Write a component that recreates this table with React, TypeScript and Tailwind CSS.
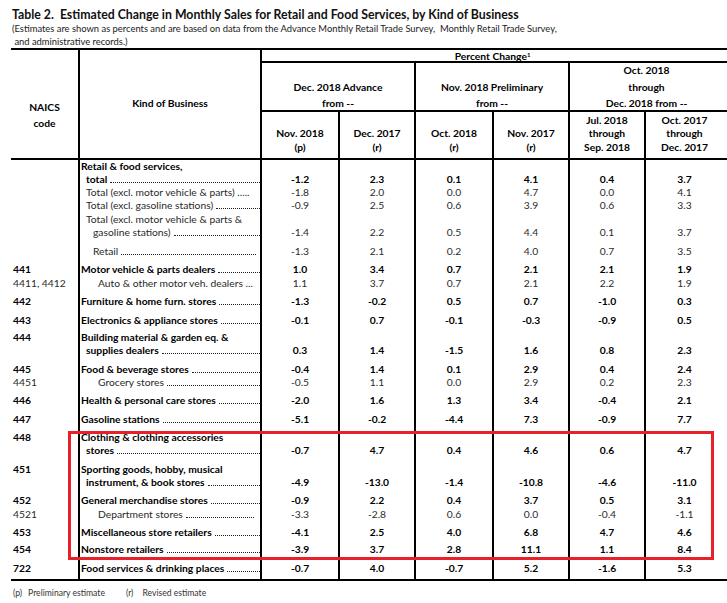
type Line = { t: string; ind: string; leader?: boolean; trail?: string };
type Row = { code?: string; lines: Line[]; vals: string[]; bold?: boolean; pt: string; pb?: string };

const valCols = ['w-[78px]', 'w-[76px]', 'w-[78px]', 'w-[76px]', 'w-[76px]', 'flex-1 pr-[4px]'];

const rows: Row[] = [
  {
    lines: [
      { t: 'Retail & food services,', ind: 'pl-[1px]' },
      { t: 'total', ind: 'pl-[6px]', leader: true },
    ],
    vals: ['-1.2', '2.3', '0.1', '4.1', '0.4', '3.7'],
    bold: true,
    pt: 'pt-0',
  },
  {
    lines: [{ t: 'Total (excl. motor vehicle & parts) .....', ind: 'pl-[6px]' }],
    vals: ['-1.8', '2.0', '0.0', '4.7', '0.0', '4.1'],
    pt: 'pt-0',
  },
  {
    lines: [{ t: 'Total (excl. gasoline stations)', ind: 'pl-[6px]', leader: true }],
    vals: ['-0.9', '2.5', '0.6', '3.9', '0.6', '3.3'],
    pt: 'pt-0',
  },
  {
    lines: [
      { t: 'Total (excl. motor vehicle & parts &', ind: 'pl-[6px]' },
      { t: 'gasoline stations)', ind: 'pl-[13px]', leader: true },
    ],
    vals: ['-1.4', '2.2', '0.5', '4.4', '0.1', '3.7'],
    pt: 'pt-[1px]',
  },
  {
    lines: [{ t: 'Retail', ind: 'pl-[13px]', leader: true, trail: 'pr-[4px]' }],
    vals: ['-1.3', '2.1', '0.2', '4.0', '0.7', '3.5'],
    pt: 'pt-[6px]',
  },
  {
    code: '441',
    lines: [{ t: 'Motor vehicle & parts dealers', ind: 'pl-[1px]', leader: true }],
    vals: ['1.0', '3.4', '0.7', '2.1', '2.1', '1.9'],
    bold: true,
    pt: 'pt-[5px]',
  },
  {
    code: '4411, 4412',
    lines: [{ t: 'Auto & other motor veh. dealers ...', ind: 'pl-[18px]' }],
    vals: ['1.1', '3.7', '0.7', '2.1', '2.2', '1.9'],
    pt: 'pt-[1px]',
  },
  {
    code: '442',
    lines: [{ t: 'Furniture & home furn. stores', ind: 'pl-[1px]', leader: true }],
    vals: ['-1.3', '-0.2', '0.5', '0.7', '-1.0', '0.3'],
    bold: true,
    pt: 'pt-[5px]',
  },
  {
    code: '443',
    lines: [{ t: 'Electronics & appliance stores', ind: 'pl-[1px]', leader: true }],
    vals: ['-0.1', '0.7', '-0.1', '-0.3', '-0.9', '0.5'],
    bold: true,
    pt: 'pt-[6px]',
  },
  {
    code: '444',
    lines: [
      { t: 'Building material & garden eq. &', ind: 'pl-[1px]' },
      { t: 'supplies dealers', ind: 'pl-[6px]', leader: true },
    ],
    vals: ['0.3', '1.4', '-1.5', '1.6', '0.8', '2.3'],
    bold: true,
    pt: 'pt-[4px]',
  },
  {
    code: '445',
    lines: [{ t: 'Food & beverage stores', ind: 'pl-[1px]', leader: true }],
    vals: ['-0.4', '1.4', '0.1', '2.9', '0.4', '2.4'],
    bold: true,
    pt: 'pt-[6px]',
  },
  {
    code: '4451',
    lines: [{ t: 'Grocery stores', ind: 'pl-[18px]', leader: true }],
    vals: ['-0.5', '1.1', '0.0', '2.9', '0.2', '2.3'],
    pt: 'pt-0',
  },
  {
    code: '446',
    lines: [{ t: 'Health & personal care stores', ind: 'pl-[1px]', leader: true }],
    vals: ['-2.0', '1.6', '1.3', '3.4', '-0.4', '2.1'],
    bold: true,
    pt: 'pt-[5px]',
  },
  {
    code: '447',
    lines: [{ t: 'Gasoline stations', ind: 'pl-[1px]', leader: true }],
    vals: ['-5.1', '-0.2', '-4.4', '7.3', '-0.9', '7.7'],
    bold: true,
    pt: 'pt-[6px]',
  },
  {
    code: '448',
    lines: [
      { t: 'Clothing & clothing accessories', ind: 'pl-[1px]' },
      { t: 'stores', ind: 'pl-[6px]', leader: true },
    ],
    vals: ['-0.7', '4.7', '0.4', '4.6', '0.6', '4.7'],
    bold: true,
    pt: 'pt-[5px]',
  },
  {
    code: '451',
    lines: [
      { t: 'Sporting goods, hobby, musical', ind: 'pl-[1px]' },
      { t: 'instrument, & book stores', ind: 'pl-[6px]', leader: true },
    ],
    vals: ['-4.9', '-13.0', '-1.4', '-10.8', '-4.6', '-11.0'],
    bold: true,
    pt: 'pt-[6px]',
  },
  {
    code: '452',
    lines: [{ t: 'General merchandise stores', ind: 'pl-[1px]', leader: true }],
    vals: ['-0.9', '2.2', '0.4', '3.7', '0.5', '3.1'],
    bold: true,
    pt: 'pt-[5px]',
  },
  {
    code: '4521',
    lines: [{ t: 'Department stores', ind: 'pl-[18px]', leader: true, trail: 'pr-[6px]' }],
    vals: ['-3.3', '-2.8', '0.6', '0.0', '-0.4', '-1.1'],
    pt: 'pt-[1px]',
  },
  {
    code: '453',
    lines: [{ t: 'Miscellaneous store retailers', ind: 'pl-[1px]', leader: true }],
    vals: ['-4.1', '2.5', '4.0', '6.8', '4.7', '4.6'],
    bold: true,
    pt: 'pt-[5px]',
  },
  {
    code: '454',
    lines: [{ t: 'Nonstore retailers', ind: 'pl-[1px]', leader: true }],
    vals: ['-3.9', '3.7', '2.8', '11.1', '1.1', '8.4'],
    bold: true,
    pt: 'pt-[4px]',
  },
  {
    code: '722',
    lines: [{ t: 'Food services & drinking places', ind: 'pl-[1px]', leader: true }],
    vals: ['-0.7', '4.0', '-0.7', '5.2', '-1.6', '5.3'],
    bold: true,
    pt: 'pt-[6px]',
    pb: 'pb-[4px]',
  },
];

function BodyRow({ row }: { row: Row }) {
  const weight = row.bold ? 'font-bold text-black' : 'font-normal text-[#2a2a2a]';
  const pad = `${row.pt} ${row.pb ?? ''}`;
  return (
    <div className={`flex ${weight}`}>
      <div className={`w-[69px] border-r-2 border-black pl-[2px] ${pad}`}>
        <div className="h-[13px] leading-[13px]">{row.code}</div>
      </div>
      <div className={`w-[182px] border-r-2 border-black ${pad}`}>
        {row.lines.map((l, i) => (
          <div key={i} className={`flex h-[13px] leading-[13px] ${l.ind} ${l.trail ?? ''}`}>
            <span className="whitespace-pre">{l.t}</span>
            {/* dot leader */}
            {l.leader && <span className="mb-[3px] ml-[3px] min-w-0 flex-1 border-b border-dotted border-[#222]" />}
          </div>
        ))}
      </div>
      {row.vals.map((v, i) => (
        <div
          key={i}
          className={`flex flex-col justify-end text-center ${valCols[i]} ${i < 5 ? 'border-r-2 border-black' : ''} ${pad}`}
        >
          <div className="h-[13px] leading-[13px]">{v}</div>
        </div>
      ))}
    </div>
  );
}

function Group({ lines }: { lines: string[] }) {
  return (
    <div className="flex h-[47px] flex-col justify-between text-center">
      {lines.map((l, i) => (
        <div key={i} className="h-[14px] leading-[14px]">
          {l}
        </div>
      ))}
    </div>
  );
}

function SubHead({ lines, w, last }: { lines: string[]; w: string; last?: boolean }) {
  return (
    <div
      className={`flex h-[46px] flex-col justify-end pb-[4px] text-center ${w} ${last ? '' : 'border-r-2 border-black'}`}
    >
      {lines.map((l, i) => (
        <div key={i} className="h-[13.5px] leading-[13.5px]">
          {l}
        </div>
      ))}
    </div>
  );
}

export default function App() {
  return (
    <div className="relative h-[603px] w-[727px] overflow-hidden bg-white font-['Lato',sans-serif] text-black">
      <div className="pl-[12px] pt-[7px]">
        <div className="whitespace-pre text-[12.3px] font-bold leading-[16px] text-[#111]">
          {'Table 2.  Estimated Change in Monthly Sales for Retail and Food Services, by Kind of Business'}
        </div>
        <div className="whitespace-pre text-[9.4px] leading-[12.5px] text-[#1a1a1a]">
          {'(Estimates are shown as percents and are based on data from the Advance Monthly Retail Trade Survey,  Monthly Retail Trade Survey,'}
          <br />
          {' and administrative records.)'}
        </div>
      </div>

      <div className="ml-[11px] text-[10.3px]">
        {/* header */}
        <div className="flex border-y-2 border-black font-bold">
          <div className="flex w-[69px] flex-col items-center border-r-2 border-black pt-[49px]">
            <div className="leading-[16px]">NAICS</div>
            <div className="leading-[16px]">code</div>
          </div>
          <div className="w-[182px] border-r-2 border-black pt-[46px] text-center leading-[14px]">
            Kind of Business
          </div>
          <div className="flex flex-1 flex-col">
            <div className="h-[13px] border-b-2 border-black pr-[4px] text-center leading-[13px]">
              Percent Change<sup className="text-[6px]">1</sup>
            </div>
            <div className="flex border-b-2 border-black">
              <div className="w-[154px] border-r-2 border-black">
                <Group lines={['', 'Dec. 2018 Advance', 'from --']} />
              </div>
              <div className="w-[154px] border-r-2 border-black">
                <Group lines={['', 'Nov. 2018 Preliminary', 'from --']} />
              </div>
              <div className="flex-1 pr-[4px]">
                <Group lines={['Oct. 2018', 'through', 'Dec. 2018 from --']} />
              </div>
            </div>
            <div className="flex">
              <SubHead w="w-[78px]" lines={['Nov. 2018', '(p)']} />
              <SubHead w="w-[76px]" lines={['Dec. 2017', '(r)']} />
              <SubHead w="w-[78px]" lines={['Oct. 2018', '(r)']} />
              <SubHead w="w-[76px]" lines={['Nov. 2017', '(r)']} />
              <SubHead w="w-[76px]" lines={['Jul. 2018', 'through', 'Sep. 2018']} />
              <SubHead w="flex-1 pr-[4px]" lines={['Oct. 2017', 'through', 'Dec. 2017']} last />
            </div>
          </div>
        </div>

        {/* body */}
        <div className="border-b-2 border-black">
          {rows.map((r, i) => (
            <BodyRow key={i} row={r} />
          ))}
        </div>

        <div className="mt-[6px] flex text-[8.6px] leading-[12px] text-[#333]">
          <span className="pl-[2px]">(p)</span>
          <span className="pl-[6px]">Preliminary estimate</span>
          <span className="pl-[21px]">(r)</span>
          <span className="pl-[9px]">Revised estimate</span>
        </div>
      </div>

      {/* highlight box */}
      <div className="absolute left-[68px] top-[431px] h-[129px] w-[646px] border-[3px] border-[#e8202a]" />
    </div>
  );
}
